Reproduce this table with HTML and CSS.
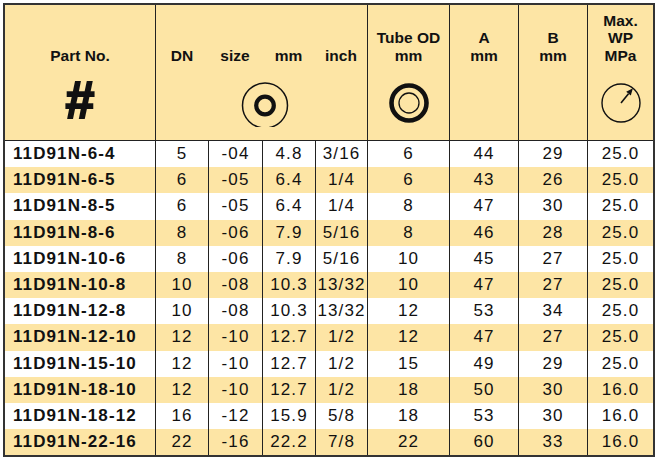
FILE: index.html
```html
<!DOCTYPE html>
<html lang="en">
<head>
<meta charset="utf-8">
<title>11D91N fittings</title>
<link rel="stylesheet" href="styles.css">
</head>
<body>
<table class="spec">
  <colgroup>
    <col class="c-part"><col class="c-dn"><col class="c-size"><col class="c-mm"><col class="c-inch">
    <col class="c-tube"><col class="c-a"><col class="c-b"><col class="c-wp">
  </colgroup>
  <thead>
    <tr>
      <th class="first">
        <div class="lbl">Part No.</div>
        <div class="hash">#</div>
      </th>
      <th colspan="4">
        <div class="sub"><span>DN</span><span>size</span><span>mm</span><span>inch</span></div>
        <div class="ico ico-shift">
          <svg width="48" height="48" viewBox="0 0 48 48"><circle cx="24" cy="26.5" r="22.5" fill="none" stroke="#111" stroke-width="1.5"/><circle cx="24" cy="26.5" r="8.8" fill="none" stroke="#111" stroke-width="4.2"/></svg>
        </div>
      </th>
      <th>
        <div class="lbl">Tube OD<br>mm</div>
        <div class="ico">
          <svg width="48" height="48" viewBox="0 0 48 48"><circle cx="24" cy="24" r="17.5" fill="none" stroke="#111" stroke-width="4.6"/><circle cx="24" cy="24" r="10" fill="none" stroke="#111" stroke-width="1.3"/></svg>
        </div>
      </th>
      <th><div class="lbl">A<br>mm</div></th>
      <th><div class="lbl">B<br>mm</div></th>
      <th>
        <div class="lbl">Max.<br>WP<br>MPa</div>
        <div class="ico">
          <svg width="48" height="48" viewBox="0 0 48 48"><circle cx="24" cy="24" r="19" fill="none" stroke="#111" stroke-width="1.4"/><line x1="24" y1="24" x2="31.5" y2="14.7" stroke="#111" stroke-width="1.6"/><polygon points="35.9,9.2 33.8,16.6 29.2,12.8" fill="#111"/></svg>
        </div>
      </th>
    </tr>
  </thead>
  <tbody>
    <tr><td>11D91N-6-4</td><td>5</td><td>-04</td><td>4.8</td><td>3/16</td><td>6</td><td>44</td><td>29</td><td>25.0</td></tr>
    <tr><td>11D91N-6-5</td><td>6</td><td>-05</td><td>6.4</td><td>1/4</td><td>6</td><td>43</td><td>26</td><td>25.0</td></tr>
    <tr><td>11D91N-8-5</td><td>6</td><td>-05</td><td>6.4</td><td>1/4</td><td>8</td><td>47</td><td>30</td><td>25.0</td></tr>
    <tr><td>11D91N-8-6</td><td>8</td><td>-06</td><td>7.9</td><td>5/16</td><td>8</td><td>46</td><td>28</td><td>25.0</td></tr>
    <tr><td>11D91N-10-6</td><td>8</td><td>-06</td><td>7.9</td><td>5/16</td><td>10</td><td>45</td><td>27</td><td>25.0</td></tr>
    <tr><td>11D91N-10-8</td><td>10</td><td>-08</td><td>10.3</td><td>13/32</td><td>10</td><td>47</td><td>27</td><td>25.0</td></tr>
    <tr><td>11D91N-12-8</td><td>10</td><td>-08</td><td>10.3</td><td>13/32</td><td>12</td><td>53</td><td>34</td><td>25.0</td></tr>
    <tr><td>11D91N-12-10</td><td>12</td><td>-10</td><td>12.7</td><td>1/2</td><td>12</td><td>47</td><td>27</td><td>25.0</td></tr>
    <tr><td>11D91N-15-10</td><td>12</td><td>-10</td><td>12.7</td><td>1/2</td><td>15</td><td>49</td><td>29</td><td>25.0</td></tr>
    <tr><td>11D91N-18-10</td><td>12</td><td>-10</td><td>12.7</td><td>1/2</td><td>18</td><td>50</td><td>30</td><td>16.0</td></tr>
    <tr><td>11D91N-18-12</td><td>16</td><td>-12</td><td>15.9</td><td>5/8</td><td>18</td><td>53</td><td>30</td><td>16.0</td></tr>
    <tr><td>11D91N-22-16</td><td>22</td><td>-16</td><td>22.2</td><td>7/8</td><td>22</td><td>60</td><td>33</td><td>16.0</td></tr>
  </tbody>
</table>
</body>
</html>
```
FILE: styles.css
```css
html, body {
  margin: 0;
  padding: 0;
  background: #ffffff;
}

body {
  padding: 3px 0 0 3px;
  font-family: "Liberation Sans", Arial, sans-serif;
  color: #111111;
}

.spec {
  table-layout: fixed;
  border-collapse: separate;
  border-spacing: 0;
  width: 652px;
  border: 2px solid #333333;
}

.c-part { width: 150px; }
.c-dn { width: 53px; }
.c-size { width: 54px; }
.c-mm { width: 53px; }
.c-inch { width: 52px; }
.c-tube { width: 82px; }
.c-a { width: 69px; }
.c-b { width: 69px; }
.c-wp { width: 66px; }

.spec th,
.spec td {
  box-sizing: border-box;
  padding: 0;
  border-left: 1px solid #222222;
}

.spec th:first-child,
.spec td:first-child {
  border-left: none;
}

.spec th {
  height: 136px;
  vertical-align: top;
  background: #fde5a5;
  border-bottom: 1px solid #222222;
  font-size: 15.5px;
  font-weight: bold;
  line-height: 17.5px;
  text-align: center;
}

.lbl {
  height: 59px;
  display: flex;
  flex-direction: column;
  justify-content: flex-end;
  align-items: center;
}

.sub {
  height: 59px;
  display: grid;
  grid-template-columns: 52px 54px 53px 52px;
  align-items: end;
}

.hash {
  padding-top: 10px;
  height: 52px;
  font-size: 52px;
  line-height: 52px;
  font-weight: bold;
  -webkit-text-stroke: 2px #111111;
}

.ico {
  padding-top: 15px;
  display: flex;
  justify-content: center;
}

.ico svg {
  display: block;
}

.ico-shift {
  padding-left: 6px;
}

.spec td {
  height: 26.2px;
  font-size: 17px;
  letter-spacing: 1.1px;
  line-height: 20px;
  text-align: center;
  vertical-align: middle;
  white-space: nowrap;
}

.spec td:first-child {
  text-align: left;
  padding-left: 8px;
  font-weight: bold;
}

.spec tbody tr:nth-child(even) td {
  background: #fde5a5;
}
```
